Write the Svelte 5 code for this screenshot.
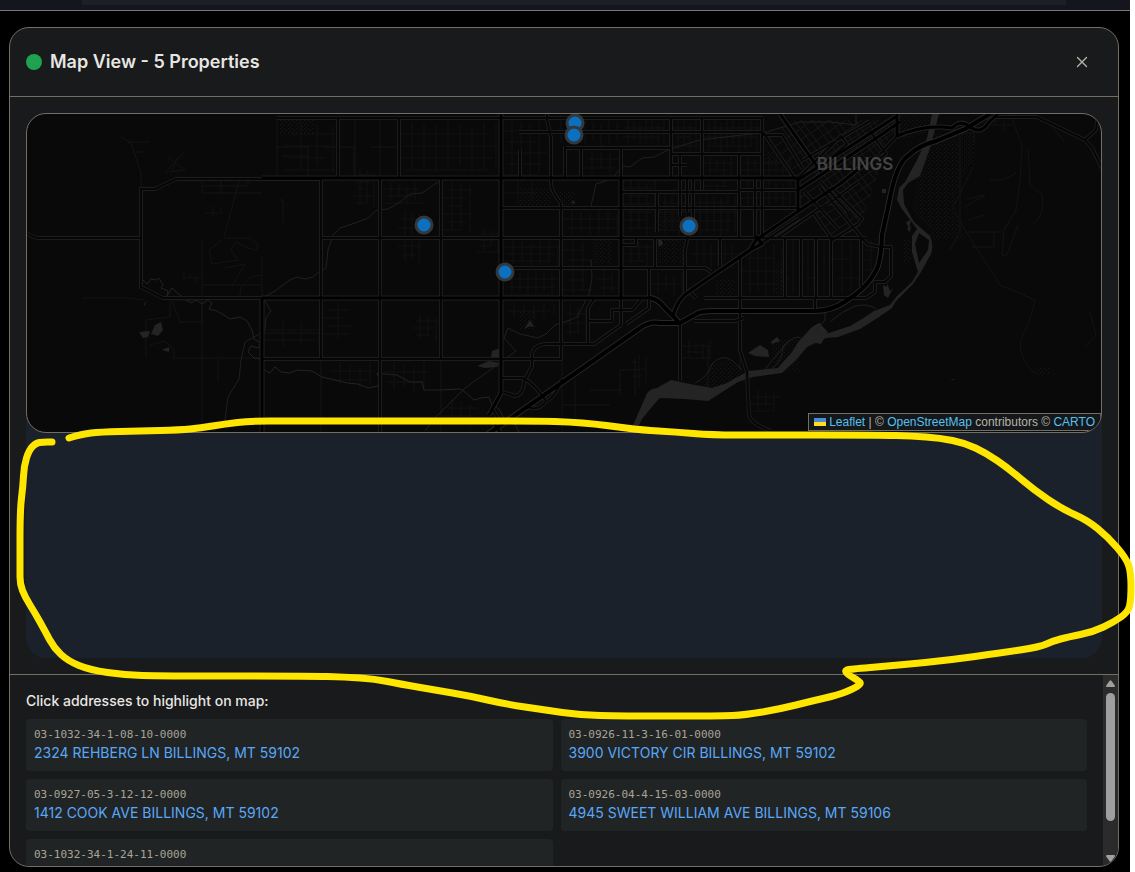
<script>
  const properties = [
    { parcel: '03-1032-34-1-08-10-0000', address: '2324 REHBERG LN BILLINGS, MT 59102', x: 575, y: 123 },
    { parcel: '03-0926-11-3-16-01-0000', address: '3900 VICTORY CIR BILLINGS, MT 59102', x: 505, y: 272 },
    { parcel: '03-0927-05-3-12-12-0000', address: '1412 COOK AVE BILLINGS, MT 59102', x: 689, y: 226 },
    { parcel: '03-0926-04-4-15-03-0000', address: '4945 SWEET WILLIAM AVE BILLINGS, MT 59106', x: 424, y: 225 },
    { parcel: '03-1032-34-1-24-11-0000', address: '', x: 574, y: 135 },
  ];

  let open = $state(true);
  let selected = $state(-1);

  // Arterial roads: a dark core between two lighter edges.
  const roads = [
    'M27 233Q33 238 40 238H141',
    'M262 298H163L141 287V189H155L176 179H320',
    'M277 118H640', 'M338 118V178', 'M399 118V178',
    'M321 178V359', 'M380 178V432', 'M441 178V359',
    'M321 238H866', 'M502 208H798', 'M502 268H705L711 272', 'M262 359H562',
    'M547 114V120L551 138V184Q552 193 561 203V359',
    'M519 132H763', 'M520 150V178', 'M565 146V178', 'M581 148V178', 'M566 148H670',
    'M621 148V325', 'M671 118V178', 'M702 118V190', 'M762 118V238', 'M739 154V238',
    'M680 154V216', 'M687 178V212', 'M693 178V220', 'M670 154H763', 'M672 165H687',
    'M755 178V238', 'M622 192H739', 'M739 190H798', 'M657 192V232', 'M655 238V267', 'M622 245H636V238',
    'M649 269V298', 'M688 236L685 250V292', 'M720 238V266', 'M785 238V298', 'M801 238V298', 'M816 238V298', 'M831 238V298', 'M861 238V286',
    'M704 298H866L875 292V282H885L891 276V247H881', 'M691 293L696 298', 'M815 298V311',
    'M740 258V350L747 372L749 415Q751 424 771 431', 'M680 322V381', 'M694 321H735L744 318',
    'M561 344H594L621 325', 'M588 344V308L594 299', 'M612 321V310H632L641 300', 'M588 321H612',
    'M649 300V308L626 324',
    'M502 378H522Q533 382 546 401Q540 411 528 407', 'M503 392L515 396Q523 395 524 382L532 366V354Q534 345 545 344H562',
    'M493 410L503 426', 'M548 401Q558 392 562 379',
    'M763 135H782L803 169', 'M763 132L796 180', 'M798 178L841 136L847 144L818 169',
    'M803 160L870 121', 'M870 131L886 154L875 162', 'M897 136L880 154', 'M858 182L827 205', 'M813 212L831 238',
    'M834 190L862 219L858 224L831 241', 'M820 187L867 244L881 247', 'M820 181L848 212', 'M804 191L838 229',
    'M720 271L799 218', 'M777 238L822 207', 'M763 118H640',
    'M995 117H1037L1085 140L1092 148L1102 168', 'M1085 140L1096 130L1098 114',
  ];

  const arterials = [
    'M262 178H798V211', 'M501 114V393L489 415', 'M262 298V432', 'M262 298H652',
    'M621 178V298', 'M780 114L821 172', 'M798 180L897 116', 'M798 190L872 141L900 122', 'M897 114V136Q920 126 942 127L952 128Q961 119 970 127Q981 135 989 122L998 114',
    'M500 432L492 420', 'M673 315Q678 298 690 291L750 250L756 240L800 210L840 184L872 158', 'M750 250L762 244L756 236',
  ];

  const highways = [
    'M488 434L570 377L640 328Q650 321 660 323L680 323L698 313Q703 311 712 311H814Q832 311 846 301Q870 286 878 266Q882 252 882 235L889 203Q896 163 909 155Q918 146 936 141L965 129L990 114',
    'M650 298Q658 299 664 307L674 317L680 324',
  ];

  const canals = [
    'M264 297L275 291L290 280L297 277L305 279L313 277L320 271L326 268L328 250L333 235L340 228L355 223L368 218L377 210L388 209L400 202L410 194L422 193L435 184L445 179',
    'M265 301L271 311L266 318L265 331L245 342L241 360L239 379L228 397L225 420L222 425',
    'M425 431L435 418L465 388L500 363L516 351L504 338L508 328L520 334L538 338L546 334L555 325L570 320L577 317L589 294L592 278L591 260',
    'M591 206L596 184L612 179L622 166L630 167L642 158L654 157L670 149L700 140L742 135L763 133L800 122L830 122L856 125V114',
    'M695 383Q708 377 712 364Q722 353 733 361L742 370', 'M763 372Q777 354 789 341', 'M771 369Q784 360 783 346Q796 334 801 338',
    'M830 322Q842 311 855 306Q868 303 876 309', 'M825 309V320L816 331',
  ];

  const creeks = [
    'M143 280L147 284L151 279L156 280L159 278L163 285L161 288L168 291L167 296L172 288L175 291L180 295L184 299L192 303L196 300L202 304L208 300L212 303L209 309L217 311L224 315L230 319L240 317L247 321L252 330L254 339L261 343L258 348L251 346L248 352L254 358L261 359',
    'M264 370L270 373L275 367L281 372L290 373L297 370L312 371L322 377L335 380L347 383L358 384L368 388L378 386L379 379L377 373L385 374L397 375L410 382L422 382L424 390L440 390L460 389L465 392L474 400L481 398L489 397L492 405L499 409L505 420L515 424L519 432',
  ];

  // Local streets, barely lighter than the ground.
  const lanes = [
    'M277 118V178', 'M277 147H308V178', 'M282 156H307', 'M325 147H354V178', 'M202 240V432', 'M262 256V298', 'M82 298H128L143 300', 'M172 358H262',
    'M202 181V193H262', 'M202 186H248V181', 'M221 181V193', 'M239 181L224 237', 'M224 238H250L258 244L256 250L248 248L236 242L231 250L238 260L212 264L209 250L222 240',
    'M121 137L131 143L135 155L141 173V189', 'M128 142H150', 'M136 152H146', 'M165 173L185 151', 'M168 157L185 170L170 172', 'M172 171L177 158',
    'M146 356V320L170 317V298', 'M150 345L165 341L174 350V357', 'M218 359V380', 'M172 300H202V322H180Z',
    'M202 285H262', 'M240 298Q238 278 262 275', 'M225 268L245 264L232 286', 'M278 200H283V223',
    'M974 130V145', 'M974 133H960V232L950 250', 'M973 167L953 208L965 230L1000 285L1035 300Q1033 310 1028 325Q1010 350 1035 374', 'M1010 114L1022 145L1020 180L1016 210L1004 230L1002 255H1007L1018 225',
    'M1028 148L1030 185L1042 195Q1046 215 1032 225', 'M1016 173L1003 180H990', 'M965 207L985 195L966 199', 'M968 220L985 215', 'M966 232H1002', 'M972 247H994V232', 'M1050 124L1065 142', 'M1090 312L1096 335L1085 347',
    'M740 298V370', 'M708 345V388', 'M635 358V395', 'M640 370H620V395', 'M562 345V432', 'M562 405H610', 'M575 380V420', 'M590 390H622', 'M321 359V432', 'M441 359V432',
    'M262 333H321V298', 'M370 147H400', 'M355 118V178', 'M380 118V178',
  ];

  // Neighbourhood blocks: x, y, width, height, column step, row step.
  const blocks = [
    [503, 120, 44, 56, 9, 11], [553, 120, 66, 26, 8, 13], [583, 150, 36, 26, 9, 9], [622, 119, 48, 28, 6, 9], [672, 119, 29, 34, 6, 9],
    [703, 119, 58, 34, 6, 9], [703, 156, 35, 22, 7, 7], [741, 156, 56, 22, 7, 7], [623, 180, 34, 56, 8, 8], [658, 194, 80, 43, 7, 9], [741, 180, 56, 28, 7, 9],
    [696, 180, 42, 12, 7, 6], [563, 210, 57, 27, 9, 9], [563, 240, 30, 57, 10, 10], [596, 270, 24, 27, 8, 9], [623, 240, 31, 27, 8, 7],
    [690, 240, 48, 28, 7, 14], [742, 245, 42, 52, 8, 13], [786, 240, 14, 57, 7, 19], [802, 240, 13, 57, 6, 19], [818, 240, 12, 57, 6, 19], [833, 240, 27, 57, 9, 19],
    [504, 240, 56, 27, 9, 7], [504, 271, 56, 26, 8, 8], [504, 302, 56, 18, 10, 9], [504, 180, 42, 26, 14, 13],
    [400, 122, 98, 50, 12, 12], [353, 168, 22, 40, 7, 7], [383, 182, 40, 22, 8, 7], [398, 210, 22, 54, 7, 9], [443, 182, 28, 50, 9, 8],
    [477, 228, 23, 25, 7, 6], [412, 314, 28, 28, 8, 7], [323, 302, 30, 40, 15, 8], [265, 320, 55, 30, 18, 10], [285, 122, 50, 50, 16, 12],
    [330, 362, 48, 26, 10, 9], [384, 362, 50, 30, 10, 10], [443, 400, 35, 28, 9, 8], [178, 272, 24, 12, 6, 6],
    [682, 340, 30, 20, 7, 6], [750, 390, 30, 22, 8, 7], [632, 355, 15, 35, 7, 7], [562, 305, 25, 35, 8, 9], [650, 272, 34, 24, 8, 12], [862, 240, 18, 40, 9, 10],
    [205, 206, 24, 14, 8, 7], [980, 118, 32, 14, 8, 7],
  ];

  const blockPath = ([x, y, w, h, dx, dy]) => {
    let d = '';
    let i = 0;
    for (let cx = x + dx; cx < x + w; cx += dx, i++) d += `M${cx} ${y + (i % 3) * 2}V${y + h - ((i + 1) % 3) * 3}`;
    for (let cy = y + dy; cy < y + h; cy += dy, i++) d += `M${x + (i % 2) * 4} ${cy}H${x + w - (i % 3) * 5}`;
    return d;
  };
  const localPath = blocks.map(blockPath).join('');

  let downtown = '';
  for (let i = 0; i < 15; i++) downtown += `M${770 + i * 9} ${112 + (i % 2) * 3}l78 104`;
  for (let i = 0; i < 16; i++) downtown += `M${770 + i * 5} ${150 + i * 8}l100 -70`;

  // Freehand marker line, rounded by running curves through the midpoints.
  const marks = [
    [69, 438], [82, 434], [100, 432], [140, 431], [180, 430], [200, 428], [225, 424], [250, 421], [290, 421], [480, 421], [540, 421], [570, 422],
    [595, 424], [618, 427], [642, 430], [675, 432], [712, 435], [760, 435], [880, 435], [912, 436], [940, 438], [965, 443], [986, 453], [1008, 468],
    [1034, 490], [1062, 509], [1087, 520], [1108, 537], [1126, 558], [1131, 572], [1131, 600], [1128, 612], [1114, 622], [1093, 632], [1068, 637],
    [1053, 641], [1040, 647], [1000, 653], [950, 660], [900, 665], [852, 669], [845, 670], [847, 674], [859, 681], [861, 684], [853, 689], [838, 695],
    [812, 701], [780, 709], [745, 715], [720, 716], [620, 716], [580, 715], [545, 710], [505, 704], [470, 696], [435, 690], [400, 684], [375, 679],
    [345, 677], [310, 676], [160, 676], [125, 675], [90, 670], [68, 661], [54, 648], [45, 631], [35, 613], [25, 597], [20, 584], [20, 570], [20, 510],
    [23, 486], [24, 466], [29, 450], [36, 443], [43, 442], [52, 442],
  ];
  let markPath = `M${marks[0].join(' ')}`;
  for (let i = 1; i < marks.length - 1; i++) {
    const [x, y] = marks[i];
    const [nx, ny] = marks[i + 1];
    markPath += `Q${x} ${y} ${(x + nx) / 2} ${(y + ny) / 2}`;
  }
  markPath += `L${marks[marks.length - 1].join(' ')}`;
</script>

<div class="page">
  <header class="topbar"><div class="topbar-panel"></div></header>

  {#if open}
    <div class="dialog" role="dialog" aria-labelledby="map-title">
      <div class="dialog-head">
        <span class="status"></span>
        <h2 id="map-title">Map View - {properties.length} Properties</h2>
        <button class="close" aria-label="Close" onclick={() => (open = false)}>
          <svg width="16" height="16" viewBox="0 0 16 16"><path d="M3.5 3.5l9 9M12.5 3.5l-9 9" /></svg>
        </button>
      </div>

      <div class="dialog-body">
        <div class="map-area">
          <div class="map">
            <svg class="tiles" viewBox="27 114 1074 318" preserveAspectRatio="xMidYMid slice" role="img" aria-label="Map of Billings">
              <defs>
                <pattern id="dots" width="4" height="4" patternUnits="userSpaceOnUse">
                  <rect width="1" height="1" fill="#171717" /><rect x="2" y="2" width="1" height="1" fill="#171717" />
                </pattern>
                <clipPath id="core"><path d="M766 136L795 120H898L884 158L858 232L820 238L800 208V178Z" /></clipPath>
              </defs>
              <g fill="url(#dots)">
                <path d="M930 134H974V160L965 170L953 208L966 240H925L932 232L912 208L918 176Z" />
                <path d="M279 119H313V134H279ZM520 187H552V206H520ZM593 240H612V264H593ZM656 239H684V264H656ZM898 114H932L926 134L898 140Z" />
                <path d="M711 364L730 360L744 375L730 384L700 392ZM770 340H800V372H775ZM904 240H912V262H904ZM715 280H736V298H715ZM520 312H536V330H520ZM660 212H680V228H660ZM766 152H777V166H766Z" />
                <path d="M1036 368H1050V375H1036ZM776 262H784V296H776ZM560 192H575V205H560Z" />
              </g>
              <path class="local" d={localPath} />
              <path class="local core" d={downtown} clip-path="url(#core)" />
              <path class="lane" d={lanes.join('')} />
              <g class="water">
                <path d="M932 114H939L930 148L920 176L908 183L903 190L904 204L914 222L930 236Q934 245 931 254L921 272L913 284L896 301L892 308L879 317L860 329L838 337L826 338L807 347L796 360L782 373L753 377L738 382L708 401L685 399L660 398L656 402L642 419L636 432H630L645 398Q647 389 657 388L671 380L690 384L712 388L727 383L748 371L778 368L792 352L799 341L812 327L820 323L826 334L850 326L862 319L874 311L890 305L897 296L912 282L918 272L912 252V236L917 229L902 209L897 200L899 188L905 182L917 160L927 138ZM919 233L915 244L919 263L928 250L929 240Z" />
                <path d="M748 353L760 345L768 350L769 357L755 356ZM771 342L777 337L780 341L772 344Z" />
                <path d="M801 340L815 339L821 332L814 326L819 323L828 332L821 344Z" />
                <path d="M161 322L163 330L158 336L151 334L155 325ZM139 332L150 331L148 337L143 338ZM162 350L169 347V352ZM144 306L148 300L144 304Z" />
                <path d="M492 351L500 348V357L491 357ZM477 366L489 361L500 363L497 367L485 368ZM524 329L530 320L534 327L538 328L530 326Z" />
                <path d="M883 285L887 287V283L890 291L893 288L888 298L884 295ZM882 189H886V193H882ZM906 222L911 220L909 229ZM907 229L911 226L910 232ZM948 383L953 379L955 380L951 380ZM658 240L661 239L663 244L659 247ZM571 203L574 200L575 204Z" />
              </g>
              <path class="canal" d={canals.join('')} />
              <path class="creek" d={creeks.join('')} />
              <path class="road edge" d={roads.join('')} />
              <path class="arterial edge" d={arterials.join('')} />
              <path class="highway edge" d={highways.join('')} />
              <path class="road" d={roads.join('')} />
              <path class="arterial" d={arterials.join('')} />
              <path class="highway" d={highways.join('')} />
              <text class="city" x="855" y="170" text-anchor="middle">BILLINGS</text>
              {#each properties as p, i}
                <circle class="pin" class:active={selected === i} cx={p.x} cy={p.y} r="8" />
              {/each}
            </svg>
            <div class="attribution">
              <svg width="12" height="8" viewBox="0 0 12 8"><path fill="#4c8bdb" d="M0 0h12v4H0z" /><path fill="#ffdd19" d="M0 4h12v4H0z" /></svg>
              <a href="#leaflet">Leaflet</a> | © <a href="#osm">OpenStreetMap</a> contributors © <a href="#carto">CARTO</a>
            </div>
          </div>
        </div>
      </div>

      <div class="dialog-foot">
        <div class="list-pane">
          <h3>Click addresses to highlight on map:</h3>
          <div class="grid">
            {#each properties as p, i}
              <button class="item" onclick={() => (selected = i)}>
                <span class="parcel">{p.parcel}</span>
                {#if p.address}<span class="address">{p.address}</span>{/if}
              </button>
            {/each}
          </div>
        </div>
        <div class="scrollbar" aria-hidden="true">
          <svg width="9" height="7" viewBox="0 0 9 7"><path d="M3.6 .8q.9-1 1.800 0L8.800 5.500q.4 1.500-.8 1.500H1Q-.2 7 .2 5.500z" /></svg>
          <div class="track"><div class="thumb"></div></div>
          <svg width="9" height="7" viewBox="0 0 9 7"><path d="M3.600 6.200q.9 1 1.800 0L8.800 1.500Q9.200 0 8 0H1Q-.2 0 .2 1.500z" /></svg>
        </div>
      </div>
    </div>
  {/if}

  <svg class="marker-stroke" viewBox="0 0 1135 872" aria-hidden="true"><path d={markPath} /></svg>
</div>

<style>
  :global(body) { background: #fff; }
  .page {
    position: relative;
    box-sizing: border-box;
    min-height: 100vh;
    display: flex;
    flex-direction: column;
    border-right: 5px solid #fff;
    background: #000;
    font-family: Inter, sans-serif;
  }
  .topbar { height: 10px; padding: 0 64px 0 82px; background: #14151e; border-bottom: 1px solid #7a766d; }
  .topbar-panel { height: 5px; background: #1b2027; }
  .dialog {
    flex: 1;
    display: flex;
    flex-direction: column;
    margin: 16px 11px 5px 9px;
    border: 1px solid #736e64;
    border-radius: 20px;
    background: #181a1b;
    overflow: hidden;
  }
  .dialog-head { display: flex; align-items: center; gap: 8px; height: 68px; padding: 0 16px; border-bottom: 1px solid #736e64; }
  .status { width: 16px; height: 16px; border-radius: 50%; background: #20a14f; }
  h2 { flex: 1; margin: 0; font-size: 18px; line-height: 28px; font-weight: 600; color: #e8e6e3; }
  .close { display: flex; align-items: center; justify-content: center; width: 40px; height: 32px; padding: 0; border: 0; background: none; cursor: pointer; }
  .close path { stroke: #b8b3ab; stroke-width: 1.4; stroke-linecap: round; }
  .dialog-body { flex: 1; display: flex; padding: 16px; }
  .map-area { flex: 1; border-radius: 20px; background: #1a212b; }
  .map { position: relative; box-sizing: border-box; height: 320px; border: 1px solid #736e64; border-radius: 20px; background: #090909; overflow: hidden; }
  .tiles { display: block; width: 100%; height: 100%; }
  .tiles path { stroke-linejoin: round; }
  .local, .lane, .canal, .creek, .road, .arterial, .highway { fill: none; }
  .local { stroke: #121212; }
  .core { stroke: #181818; }
  .lane { stroke: #141414; }
  .canal { stroke: #202020; }
  .creek { stroke: #232323; }
  .water { fill: #242424; }
  .road { stroke: #060606; stroke-width: 2; }
  .road.edge { stroke: #1c1c1c; stroke-width: 4; }
  .arterial { stroke: #000; stroke-width: 3; }
  .arterial.edge { stroke: #212121; stroke-width: 5; }
  .highway { stroke: #000; stroke-width: 4; }
  .highway.edge { stroke: #272727; stroke-width: 6; }
  .city { font-size: 17px; font-weight: 600; fill: #444; }
  .pin { fill: #0b70bf; stroke: #32383c; stroke-width: 3; }
  .pin.active { fill: #d03030; }
  .attribution {
    position: absolute;
    right: 0;
    bottom: 1px;
    padding: 0 5px;
    border: 1px solid #736e64;
    background: #15181a;
    font: 12px/16px "Liberation Sans", Arial, sans-serif;
    color: #b8b2a8;
    white-space: nowrap;
  }
  .attribution a { color: #58c0f0; text-decoration: none; }
  .dialog-foot { display: flex; height: 191px; border-top: 1px solid #736e64; }
  .list-pane { flex: 1; padding: 16px; overflow: hidden; }
  h3 { margin: 0 0 8px; font-size: 14px; line-height: 20px; font-weight: 500; color: #e8e6e3; }
  .grid { display: grid; grid-template-columns: 1fr 1fr; gap: 8px; }
  .item {
    display: flex;
    flex-direction: column;
    padding: 8px;
    border: 0;
    border-radius: 4px;
    background: #212425;
    font-family: inherit;
    text-align: left;
    cursor: pointer;
  }
  .parcel { font: 11px/16px "DejaVu Sans Mono", monospace; color: #aaa498; }
  .address { font-size: 14px; line-height: 20px; color: #59a8f8; }
  .scrollbar { display: flex; flex-direction: column; align-items: center; gap: 6px; width: 15px; padding: 5px 0 4px; box-sizing: border-box; background: #2b2b2b; }
  .scrollbar svg { display: block; flex: none; }
  .scrollbar path { fill: #a0a0a0; }
  .track { flex: 1; }
  .thumb { width: 9px; height: 82%; border-radius: 5px; background: #9f9f9f; }
  .marker-stroke { position: absolute; top: 0; left: 0; width: calc(100% + 5px); pointer-events: none; }
  .marker-stroke path { fill: none; stroke: #ffe600; stroke-width: 7; stroke-linecap: round; stroke-linejoin: round; }
</style>
